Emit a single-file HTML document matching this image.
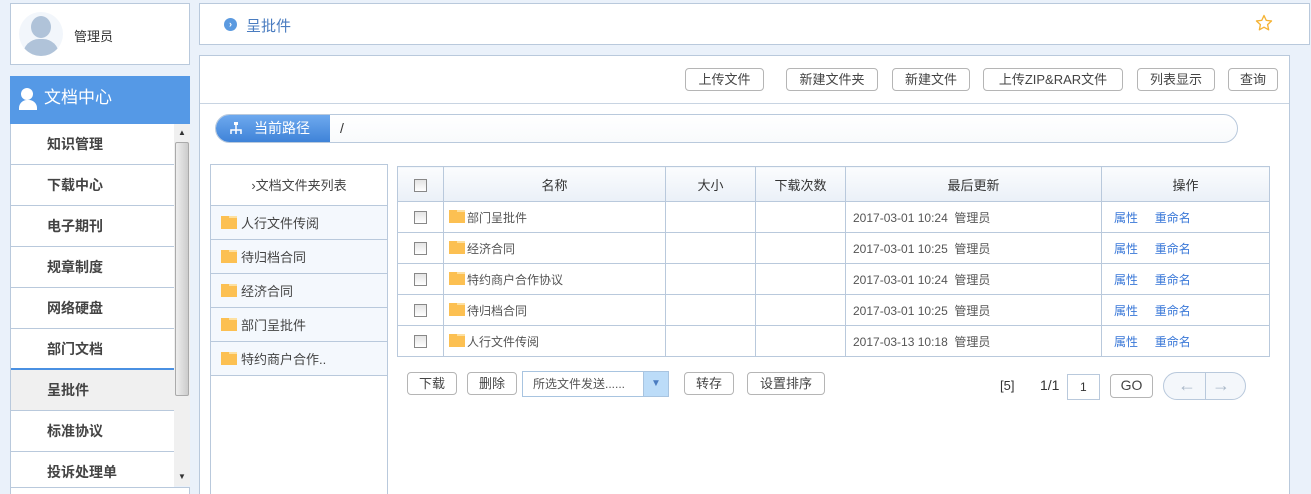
<!DOCTYPE html><html style="width:1311px;height:494px;overflow:hidden"><head><meta charset="utf-8"><style>
*{box-sizing:border-box;margin:0;padding:0}
body{width:1311px;height:494px;background:#eaf1fa;font-family:"Liberation Sans","Noto Sans CJK SC",sans-serif;font-size:13px;color:#333;position:relative;overflow:hidden}
.a{position:absolute}
.btn{position:absolute;height:23px;border:1px solid #b5b5b5;border-radius:4px;background:#fff;font-size:13px;color:#444;text-align:center;line-height:21px}
.menu div{height:41px;border-bottom:1px solid #b9c9dc;line-height:40px;padding-left:36px;font-weight:bold;font-size:14px;color:#444}
table{border-collapse:collapse;position:absolute;left:397px;top:166px;width:873px}
td,th{border:1px solid #b9c9dc;height:31px;font-size:12px;color:#555}
th{height:35px;font-weight:normal;font-size:13px;color:#333;background:linear-gradient(#fbfcfe,#eaf0f7)}
.cb{display:inline-block;width:13px;height:13px;border:1px solid #888;background:linear-gradient(#e4e4e4,#fff);vertical-align:middle}
.fd{display:inline-block;width:16px;height:13px;background:#fcc052;vertical-align:-1px;margin-right:2px;position:relative}
.fd:before{content:"";position:absolute;left:8px;top:0;width:8px;height:2px;background:#fde0a0}
.lk{color:#3a78d8}
.fl div{height:34px;border-bottom:1px solid #b9c9dc;background:#f4f8fd;line-height:36px;padding-left:10px;color:#444;font-size:13px}
.fl .fd{margin-right:4px}
</style></head><body>
<div class="a" style="left:10px;top:3px;width:180px;height:62px;background:#fff;border:1px solid #b9c9dc">
<div class="a" style="left:8px;top:8px;width:44px;height:44px;border-radius:50%;background:#f2f6fb;overflow:hidden"><div class="a" style="left:12px;top:4px;width:20px;height:22px;border-radius:50%;background:#b0c3d9"></div><div class="a" style="left:4px;top:27px;width:36px;height:20px;border-radius:16px 16px 0 0;background:#b0c3d9"></div></div>
<div class="a" style="left:63px;top:22px;font-size:13px;color:#333">管理员</div></div>
<div class="a" style="left:10px;top:76px;width:180px;height:48px;background:#5599e6;color:#fff;font-size:17px;line-height:44px;padding-left:34px">文档中心
<div class="a" style="left:11px;top:12px;width:12px;height:12px;border-radius:50%;background:#fff"></div><div class="a" style="left:9px;top:24px;width:18px;height:10px;border-radius:8px 8px 0 0;background:#fff"></div></div>
<div class="a menu" style="left:10px;top:124px;width:164px;height:370px;background:#fff;border-left:1px solid #b9c9dc;overflow:hidden">
<div>知识管理</div><div>下载中心</div><div>电子期刊</div><div>规章制度</div><div>网络硬盘</div><div style="border-bottom:2px solid #4a90e2">部门文档</div><div style="background:#f0f0f0">呈批件</div><div>标准协议</div><div>投诉处理单</div></div>
<div class="a" style="left:174px;top:124px;width:16px;height:362px;background:#f0f0f0"><div class="a" style="left:1px;top:18px;width:14px;height:254px;background:linear-gradient(90deg,#eee,#ddd,#ccc);border:1px solid #aaa;border-radius:2px"></div><div class="a" style="left:4px;top:4px;font-size:8px;color:#333">▲</div><div class="a" style="left:4px;top:348px;font-size:8px;color:#333">▼</div></div>
<div class="a" style="left:10px;top:487px;width:180px;height:10px;background:#fff;border:1px solid #b9c9dc"></div>
<div class="a" style="left:199px;top:3px;width:1111px;height:42px;background:#fff;border:1px solid #b9c9dc">
<div class="a" style="left:24px;top:14px;width:13px;height:13px;border-radius:50%;background:#5b9ae0;color:#fff;font-size:9px;line-height:13px;text-align:center;font-weight:bold">›</div>
<div class="a" style="left:46px;top:11px;font-size:15px;color:#4a7cc0">呈批件</div>
<svg class="a" style="left:1055px;top:10px" width="18" height="18" viewBox="0 0 24 24"><path d="M12 2l3 6.5 7 .8-5.2 4.8 1.4 7L12 17.6 5.8 21.1l1.4-7L2 9.3l7-.8z" fill="none" stroke="#f5b335" stroke-width="1.8" stroke-linejoin="round"/></svg></div>
<div class="a" style="left:199px;top:55px;width:1091px;height:439px;background:#fff;border:1px solid #b9c9dc;border-bottom:none">
<div class="a" style="left:0;top:47px;width:1089px;border-top:1px solid #c8d4e2"></div></div>
<div class="btn" style="left:685px;top:68px;width:79px">上传文件</div>
<div class="btn" style="left:786px;top:68px;width:92px">新建文件夹</div>
<div class="btn" style="left:892px;top:68px;width:78px">新建文件</div>
<div class="btn" style="left:983px;top:68px;width:140px">上传ZIP&amp;RAR文件</div>
<div class="btn" style="left:1137px;top:68px;width:78px">列表显示</div>
<div class="btn" style="left:1228px;top:68px;width:50px">查询</div>
<div class="a" style="left:215px;top:114px;width:1023px;height:29px;border:1px solid #b9c9dc;border-radius:15px;background:linear-gradient(#fff,#f8fafc);overflow:hidden">
<div class="a" style="left:0;top:0;width:114px;height:27px;background:linear-gradient(#6ea9ee,#3f83d8);color:#fff;font-size:14px;line-height:27px;padding-left:38px">当前路径</div>
<svg class="a" style="left:13px;top:7px" width="14" height="14"><path d="M7 1v4M2 12V8h10v4M7 5v7" stroke="#fff" fill="none" stroke-width="1.5"/><rect x="5" y="0" width="4" height="3" fill="#fff"/></svg>
<div class="a" style="left:124px;top:5px;font-size:14px;color:#333">/</div></div>
<div class="a fl" style="left:210px;top:164px;width:178px;height:340px;border:1px solid #b9c9dc;background:#fff">
<div style="background:#fff;text-align:center;padding:0;height:41px;line-height:42px">›文档文件夹列表</div>
<div><span class="fd"></span>人行文件传阅</div><div><span class="fd"></span>待归档合同</div><div><span class="fd"></span>经济合同</div><div><span class="fd"></span>部门呈批件</div><div><span class="fd"></span>特约商户合作..</div></div>
<table><tr><th style="width:46px"><span class="cb"></span></th><th style="width:222px">名称</th><th style="width:90px">大小</th><th style="width:90px">下载次数</th><th style="width:256px">最后更新</th><th>操作</th></tr>
<tr><td align=center><span class="cb"></span></td><td style="padding-left:5px"><span class="fd"></span>部门呈批件</td><td></td><td></td><td style="padding-left:7px">2017-03-01 10:24&nbsp; 管理员</td><td style="padding-left:12px"><span class="lk">属性</span>&nbsp;&nbsp;&nbsp;&nbsp;&nbsp;<span class="lk">重命名</span></td></tr>
<tr><td align=center><span class="cb"></span></td><td style="padding-left:5px"><span class="fd"></span>经济合同</td><td></td><td></td><td style="padding-left:7px">2017-03-01 10:25&nbsp; 管理员</td><td style="padding-left:12px"><span class="lk">属性</span>&nbsp;&nbsp;&nbsp;&nbsp;&nbsp;<span class="lk">重命名</span></td></tr>
<tr><td align=center><span class="cb"></span></td><td style="padding-left:5px"><span class="fd"></span>特约商户合作协议</td><td></td><td></td><td style="padding-left:7px">2017-03-01 10:24&nbsp; 管理员</td><td style="padding-left:12px"><span class="lk">属性</span>&nbsp;&nbsp;&nbsp;&nbsp;&nbsp;<span class="lk">重命名</span></td></tr>
<tr><td align=center><span class="cb"></span></td><td style="padding-left:5px"><span class="fd"></span>待归档合同</td><td></td><td></td><td style="padding-left:7px">2017-03-01 10:25&nbsp; 管理员</td><td style="padding-left:12px"><span class="lk">属性</span>&nbsp;&nbsp;&nbsp;&nbsp;&nbsp;<span class="lk">重命名</span></td></tr>
<tr><td align=center><span class="cb"></span></td><td style="padding-left:5px"><span class="fd"></span>人行文件传阅</td><td></td><td></td><td style="padding-left:7px">2017-03-13 10:18&nbsp; 管理员</td><td style="padding-left:12px"><span class="lk">属性</span>&nbsp;&nbsp;&nbsp;&nbsp;&nbsp;<span class="lk">重命名</span></td></tr></table>
<div class="btn" style="left:407px;top:372px;width:50px">下载</div>
<div class="btn" style="left:467px;top:372px;width:50px">删除</div>
<div class="a" style="left:522px;top:371px;width:147px;height:26px;border:1px solid #a8c4e0;background:#fff;font-size:12px;color:#555;line-height:24px;padding-left:10px">所选文件发送......<div class="a" style="right:0;top:0;width:25px;height:24px;background:#bcdcf8;border-left:1px solid #a8c4e0;color:#4a7cc0;font-size:10px;text-align:center;line-height:24px">▼</div></div>
<div class="btn" style="left:684px;top:372px;width:50px">转存</div>
<div class="btn" style="left:747px;top:372px;width:78px">设置排序</div>
<div class="a" style="left:1000px;top:378px;font-size:13px">[5]</div>
<div class="a" style="left:1040px;top:377px;font-size:14px">1/1</div>
<div class="a" style="left:1067px;top:374px;width:33px;height:26px;border:1px solid #b9c9dc;font-size:12px;line-height:24px;padding-left:12px">1</div>
<div class="btn" style="left:1110px;top:374px;width:43px;height:24px;font-size:14px">GO</div>
<div class="a" style="left:1163px;top:372px;width:83px;height:28px;border:1px solid #b9c9dc;border-radius:14px;background:#f4f7fb;color:#aab8c8;font-size:18px;line-height:24px">
<span class="a" style="left:14px">←</span><div class="a" style="left:41px;top:0;height:26px;border-left:1px solid #b9c9dc"></div><span class="a" style="left:48px">→</span></div>
</body></html>
